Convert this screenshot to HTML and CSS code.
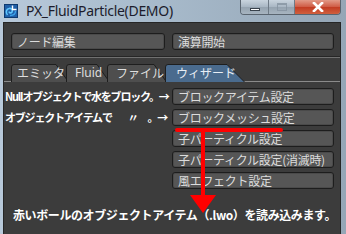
FILE: index.html
```html
<!DOCTYPE html>
<html lang="ja">
<head>
<meta charset="utf-8">
<link rel="stylesheet" href="styles.css">
</head>
<body>
<div class="window">
  <div class="titlebar">
    <svg class="appicon" width="14" height="14" viewBox="0 0 14 14">
      <rect x="0" y="0" width="14" height="14" fill="#1f5fa8"/>
      <rect x="0.5" y="0.5" width="13" height="13" fill="none" stroke="#0d3a70"/>
      <path d="M3.5 11 C1.5 9 2 5 5 4.5 C7.5 4 9 6 8 8 C7 9.5 5 9 5.2 7.5" fill="none" stroke="#5fc8ff" stroke-width="1.6"/>
      <path d="M6 11.5 C9 11.5 11.5 10 11.5 7" fill="none" stroke="#3aa0e8" stroke-width="1.4"/>
      <path d="M8.5 1.5 V5.5 H12.5" fill="none" stroke="#ffffff" stroke-width="1.4"/>
    </svg>
    <span class="title">PX_FluidParticle(DEMO)</span>
    <div class="caption">
      <div class="cb cb-min"><span class="dash"></span></div>
      <div class="cb cb-max"><span class="box"></span></div>
      <div class="cb cb-close"><svg width="12" height="10" viewBox="0 0 12 10"><path d="M2 1 L10 9 M10 1 L2 9" stroke="#ffffff" stroke-width="2.6" stroke-linecap="square"/></svg></div>
    </div>
  </div>
  <div class="client">
    <div class="toprow">
      <div class="btn btn-left">ノード編集</div>
      <div class="btn btn-right">演算開始</div>
    </div>
    <div class="sep"></div>
    <div class="tabs">
      <div class="tab t1"><svg class="tabshape" width="58" height="18" viewBox="0 0 58 18"><path d="M0.5 18 V3 Q0.5 0.5 3 0.5 H45 L57.5 18" fill="#4e4e4e" stroke="#1e1e1e"/></svg><span>エミッタ</span></div>
      <div class="tab t2"><svg class="tabshape" width="44" height="18" viewBox="0 0 44 18"><path d="M0.5 18 V3 Q0.5 0.5 3 0.5 H31 L43.5 18" fill="#4e4e4e" stroke="#1e1e1e"/></svg><span>Fluid</span></div>
      <div class="tab t3"><svg class="tabshape" width="60" height="18" viewBox="0 0 60 18"><path d="M0.5 18 V3 Q0.5 0.5 3 0.5 H47 L59.5 18" fill="#4e4e4e" stroke="#1e1e1e"/></svg><span>ファイル</span></div>
      <div class="tab t4 active"><svg class="tabshape" width="80" height="18" viewBox="0 0 80 18"><path d="M0.5 18 V3 Q0.5 0.5 3 0.5 H62 L79.5 18" fill="#4a6b8e" stroke="#1e1e1e"/></svg><span>ウィザード</span></div>
    </div>
    <div class="panel">
      <div class="grid">
        <span class="label">Nullオブジェクトで水をブロック。→</span>
        <div class="btn">ブロックアイテム設定</div>
        <span class="label">オブジェクトアイテムで<span class="ditto">〃</span><span class="maru">。→</span></span>
        <div class="btn">ブロックメッシュ設定</div>
        <span></span>
        <div class="btn">子パーティクル設定</div>
        <span></span>
        <div class="btn">子パーティクル設定(消滅時)</div>
        <span></span>
        <div class="btn">風エフェクト設定</div>
      </div>
      <p class="status">赤いボールのオブジェクトアイテム（.lwo）を読み込みます。</p>
    </div>
    <div class="annot">
      <div class="redh"></div>
      <div class="redv"></div>
      <svg class="redhead" width="26" height="18" viewBox="0 0 26 18"><path d="M0 0 H26 L13 18 Z" fill="#ff0000"/></svg>
    </div>
  </div>
</div>
</body>
</html>
```
FILE: styles.css
```css
* { box-sizing: border-box; }
html, body { margin: 0; padding: 0; }
body {
  width: 346px;
  height: 234px;
  overflow: hidden;
  background: #a9b8c6;
  font-family: "Noto Sans CJK JP", "Noto Sans", sans-serif;
}
.window {
  width: 346px;
  height: 234px;
  display: flex;
  flex-direction: column;
  background: linear-gradient(90deg, #b8c9da 0%, #a9bccd 40%, #95a6b6 100%);
}
.titlebar {
  height: 22px;
  flex: none;
  display: flex;
  align-items: flex-start;
  position: relative;
}
.appicon { margin: 4px 0 0 4px; flex: none; }
.title {
  margin: 1px 0 0 8px;
  font-family: "Noto Sans", sans-serif;
  font-size: 14px;
  line-height: 19px;
  color: #1c1c2c;
  letter-spacing: -0.3px;
}
.caption {
  margin-left: auto;
  margin-right: 5px;
  display: flex;
  height: 15px;
  border: 1px solid #5a6570;
  border-top: none;
  border-radius: 0 0 4px 4px;
  overflow: hidden;
}
.cb { height: 14px; display: flex; align-items: center; justify-content: center; }
.cb-min {
  width: 28px;
  background: linear-gradient(#c9d4de, #a8b6c3 50%, #95a3b0 51%, #a7b4c0);
  border-right: 1px solid #6e7a86;
}
.cb-max {
  width: 26px;
  background: linear-gradient(#c9d4de, #a8b6c3 50%, #95a3b0 51%, #a7b4c0);
  border-right: 1px solid #6e7a86;
}
.cb-close {
  width: 45px;
  background: linear-gradient(#e29a88, #cf5a43 50%, #c23b22 51%, #d0603e);
}
.dash { width: 10px; height: 3px; background: #ffffff; border: 1px solid #39424c; margin-top: 4px; }
.box { width: 10px; height: 8px; border: 1px solid #8592a0; border-top-width: 2px; opacity: 0.8; }
.client {
  flex: 1;
  margin: 0 5px 0 3px;
  background: #3c3c3c;
  border: 1px solid #262626;
  border-bottom: none;
  position: relative;
  padding-top: 10px;
}
.toprow {
  display: flex;
  gap: 7px;
  padding-left: 7px;
}
.btn {
  height: 17px;
  border: 1px solid #1d1d1d;
  border-radius: 3px;
  background: #565656;
  box-shadow: inset 0 0 0 1px #4a4a4a;
  color: #dcdcdc;
  font-size: 12px;
  line-height: 15px;
  padding-left: 5px;
  white-space: nowrap;
  overflow: hidden;
  letter-spacing: -0.3px;
}
.btn-left { width: 154px; }
.btn-right { width: 162px; }
.sep {
  margin-top: 6px;
  height: 2px;
  border-top: 1px solid #262626;
  border-bottom: 1px solid #707070;
}
.tabs {
  margin-top: 6px;
  display: flex;
  padding-left: 7px;
  height: 18px;
  border-bottom: 1px solid #8a8a8a;
}
.tab {
  position: relative;
  height: 17px;
  color: #dedede;
  font-size: 12px;
  line-height: 17px;
}
.tab span { position: relative; }
.tabshape { position: absolute; left: 0; top: 0; }
.t1 { width: 55px; padding-left: 6px; }
.t2 { width: 41px; padding-left: 9px; font-family: "Noto Sans", sans-serif; }
.t3 { width: 58px; padding-left: 9px; }
.t4 { width: 80px; padding-left: 11px; color: #e8eef5; }
.panel { padding-top: 6px; }
.grid {
  display: grid;
  grid-template-columns: 168px 162px;
  row-gap: 4px;
  align-items: center;
}
.label {
  color: #ffffff;
  font-size: 11px;
  font-weight: bold;
  letter-spacing: -1.2px;
  white-space: nowrap;
  padding-left: 1px;
  line-height: 17px;
}
.ditto { margin-left: 16px; }
.maru { margin-left: 10px; }
.status {
  margin: 17px 0 0 9px;
  color: #ffffff;
  font-size: 12px;
  font-weight: bold;
  letter-spacing: -0.4px;
  white-space: nowrap;
}
.annot { position: absolute; left: 0; top: 0; width: 0; height: 0; }
.redh {
  position: absolute;
  left: 171px; top: 105px;
  width: 108px; height: 4px;
  background: #ff0000;
  border-radius: 2px;
}
.redv {
  position: absolute;
  left: 197px; top: 107px;
  width: 4px; height: 70px;
  background: #ff0000;
}
.redhead { position: absolute; left: 186px; top: 172px; }
```
